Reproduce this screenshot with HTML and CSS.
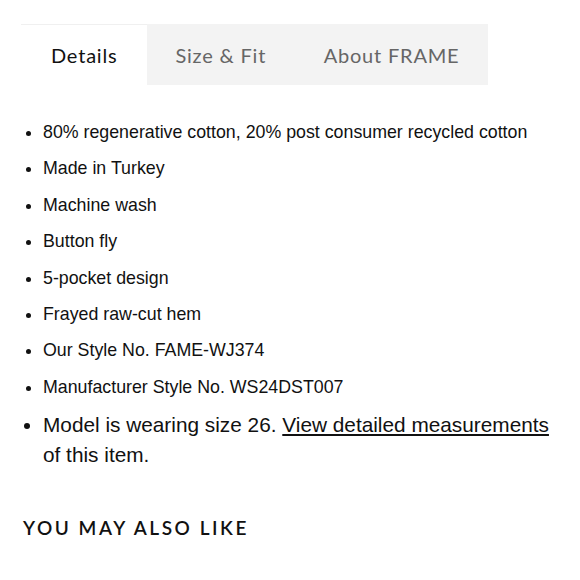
FILE: index.html
```html
<!DOCTYPE html>
<html>
<head>
<meta charset="utf-8">
<link rel="stylesheet" href="styles.css">
</head>
<body>
<div class="page">
  <div class="tabs">
    <div class="tab active">Details</div>
    <div class="tab">Size &amp; Fit</div>
    <div class="tab">About FRAME</div>
  </div>
  <ul class="details">
    <li>80% regenerative cotton, 20% post consumer recycled cotton</li>
    <li>Made in Turkey</li>
    <li>Machine wash</li>
    <li>Button fly</li>
    <li>5-pocket design</li>
    <li>Frayed raw-cut hem</li>
    <li>Our Style No. FAME-WJ374</li>
    <li>Manufacturer Style No. WS24DST007</li>
    <li class="model">Model is wearing size 26. <a href="#">View detailed measurements</a> of this item.</li>
  </ul>
  <h2 class="also">YOU MAY ALSO LIKE</h2>
</div>
</body>
</html>
```

FILE: styles.css
```css
html, body {
  margin: 0;
  padding: 0;
  background: #fff;
}
.page {
  padding: 24px 0 0 21px;
}
.tabs {
  display: flex;
  align-items: stretch;
  height: 61px;
}
.tab {
  display: flex;
  align-items: center;
  padding: 0 29px 0 28.5px;
  background: #f3f3f3;
  color: #666;
  font-family: "Lato", sans-serif;
  font-size: 20px;
  letter-spacing: 0.8px;
}
.tab.active {
  background: #fff;
  color: #111;
  border-top: 1px solid #f0f0f0;
  padding-left: 30px;
  padding-right: 29.5px;
}
.details {
  margin: 37px 0 0 0;
  padding: 0 0 0 22px;
  list-style: disc;
  font-family: "Liberation Sans", Arial, sans-serif;
  font-size: 17.8px;
  color: #111;
}
.details li {
  line-height: 20px;
  margin-bottom: 16.4px;
}
.details li.model {
  font-size: 20.8px;
  line-height: 30px;
  margin-top: -3px;
  padding-right: 20px;
}
.details a {
  color: #111;
  text-decoration: underline;
}
.also {
  margin: 46px 0 0 2px;
  font-family: "Lato", sans-serif;
  font-weight: 600;
  font-size: 19px;
  letter-spacing: 2.55px;
  color: #111;
}
```
